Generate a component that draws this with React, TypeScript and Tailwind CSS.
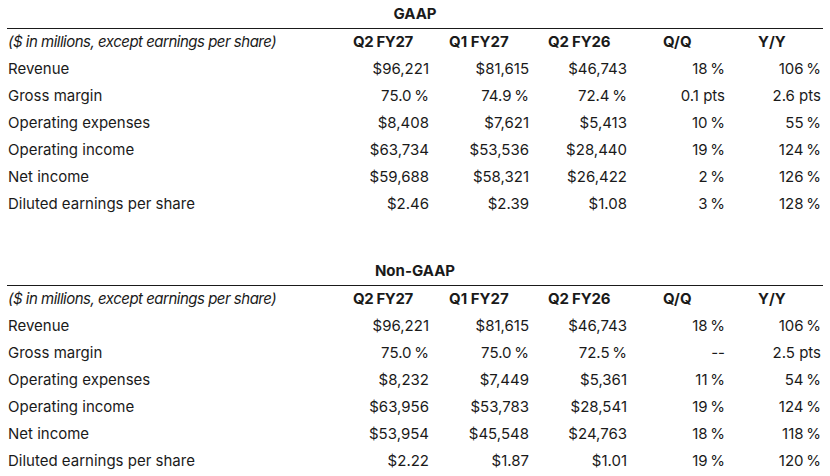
import React from 'react'

type Row = [string, string, string, string, string, string]

const gaap: Row[] = [
  ['Revenue', '$96,221', '$81,615', '$46,743', '18\u2009%', '106\u2009%'],
  ['Gross margin', '75.0\u2009%', '74.9\u2009%', '72.4\u2009%', '0.1 pts', '2.6 pts'],
  ['Operating expenses', '$8,408', '$7,621', '$5,413', '10\u2009%', '55\u2009%'],
  ['Operating income', '$63,734', '$53,536', '$28,440', '19\u2009%', '124\u2009%'],
  ['Net income', '$59,688', '$58,321', '$26,422', '2\u2009%', '126\u2009%'],
  ['Diluted earnings per share', '$2.46', '$2.39', '$1.08', '3\u2009%', '128\u2009%'],
]

const nonGaap: Row[] = [
  ['Revenue', '$96,221', '$81,615', '$46,743', '18\u2009%', '106\u2009%'],
  ['Gross margin', '75.0\u2009%', '75.0\u2009%', '72.5\u2009%', '--', '2.5 pts'],
  ['Operating expenses', '$8,232', '$7,449', '$5,361', '11\u2009%', '54\u2009%'],
  ['Operating income', '$63,956', '$53,783', '$28,541', '19\u2009%', '124\u2009%'],
  ['Net income', '$53,954', '$45,548', '$24,763', '18\u2009%', '118\u2009%'],
  ['Diluted earnings per share', '$2.22', '$1.87', '$1.01', '19\u2009%', '120\u2009%'],
]

const grid = 'grid grid-cols-[338px_92px_100px_98px_98px_90px] h-[27px] items-center'

function Table({ title, rows }: { title: string; rows: Row[] }) {
  return (
    <div>
      <div className="h-[29px] border-b border-[#1a1a1a] flex items-center justify-center font-bold">
        {title}
      </div>
      <div className={grid + ' font-bold'}>
        <div className="pl-[1px] italic font-normal tracking-[-0.5px]">
          ($ in millions, except earnings per share)
        </div>
        <div className="pl-[8px] tracking-[-0.4px]">Q2 FY27</div>
        <div className="pl-[12px]">Q1 FY27</div>
        <div className="pl-[11px] tracking-[-0.2px]">Q2 FY26</div>
        <div className="pl-[28px]">Q/Q</div>
        <div className="pl-[25px]">Y/Y</div>
      </div>
      {rows.map((r) => (
        <div key={r[0]} className={grid}>
          <div className="pl-[1px]">{r[0]}</div>
          <div className="text-right pr-[8px]">{r[1]}</div>
          <div className="text-right pr-[8px]">{r[2]}</div>
          <div className="text-right pr-[8px]">{r[3]}</div>
          <div className="text-right pr-[8px]">{r[4]}</div>
          <div className="text-right pr-[2px]">{r[5]}</div>
        </div>
      ))}
    </div>
  )
}

export default function App() {
  return (
    <div className="w-[830px] h-[476px] bg-white text-[#1a1a1a] text-[15px] px-[7px] overflow-hidden font-['Inter',sans-serif]">
      <Table title="GAAP" rows={gaap} />
      <div className="h-[39px]" />
      <Table title="Non-GAAP" rows={nonGaap} />
    </div>
  )
}
